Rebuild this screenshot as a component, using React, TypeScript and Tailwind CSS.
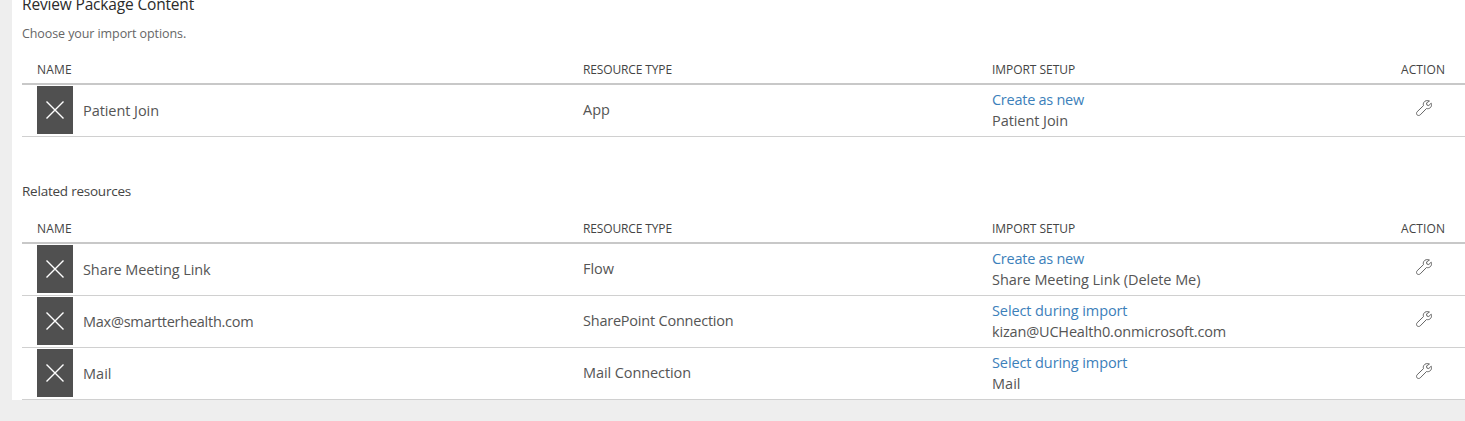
type Row = {
  name: string;
  nameTracking: string;
  type: string;
  typeTracking: string;
  setup: string;
  setupTracking: string;
  target: string;
  targetTracking: string;
};

const packageRows: Row[] = [
  {
    name: 'Patient Join',
    nameTracking: 'tracking-[-0.06px]',
    type: 'App',
    typeTracking: 'tracking-[0.03px]',
    setup: 'Create as new',
    setupTracking: 'tracking-[-0.26px]',
    target: 'Patient Join',
    targetTracking: 'tracking-[-0.06px]',
  },
];

const relatedRows: Row[] = [
  {
    name: 'Share Meeting Link',
    nameTracking: 'tracking-[-0.09px]',
    type: 'Flow',
    typeTracking: 'tracking-[-0.03px]',
    setup: 'Create as new',
    setupTracking: 'tracking-[-0.26px]',
    target: 'Share Meeting Link (Delete Me)',
    targetTracking: 'tracking-[-0.06px]',
  },
  {
    name: 'Max@smartterhealth.com',
    nameTracking: 'tracking-[-0.26px]',
    type: 'SharePoint Connection',
    typeTracking: 'tracking-[-0.22px]',
    setup: 'Select during import',
    setupTracking: 'tracking-[-0.1px]',
    target: 'kizan@UCHealth0.onmicrosoft.com',
    targetTracking: 'tracking-[-0.17px]',
  },
  {
    name: 'Mail',
    nameTracking: 'tracking-[0.02px]',
    type: 'Mail Connection',
    typeTracking: 'tracking-[-0.09px]',
    setup: 'Select during import',
    setupTracking: 'tracking-[-0.1px]',
    target: 'Mail',
    targetTracking: 'tracking-[0.02px]',
  },
];

const columns = 'grid grid-cols-[546px_409px_409px_1fr] pl-[15px]';

function CrossIcon() {
  return (
    <svg width="18" height="18" viewBox="0 0 18 18" fill="none" stroke="#fff" strokeWidth="1.4">
      <path d="M0.5 0.5L17.5 17.5M17.5 0.5L0.5 17.5" />
    </svg>
  );
}

function WrenchIcon() {
  return (
    <svg
      width="16"
      height="16"
      viewBox="0 0 16 16"
      fill="none"
      stroke="#666"
      strokeWidth="1"
      strokeLinejoin="round"
      strokeLinecap="round"
    >
      <path d="M13.1 0.9C11.3 0.1 8.9 0.6 7.9 2.3C7.2 3.4 7.1 4.6 7.5 5.6L1.1 11.8C0.3 12.7 0.3 14.1 1.1 14.9C1.9 15.7 3.3 15.7 4.2 14.9L10.5 8.5C11.7 8.9 13.1 8.7 14.2 7.8C15.5 6.7 15.9 4.8 15.2 3.2L12.8 5.5L10.9 5.1L10.6 3.3Z" />
    </svg>
  );
}

function ResourceTable({ rows }: { rows: Row[] }) {
  return (
    <div>
      <div
        className={`${columns} h-[31px] border-b-2 border-[#c8c8c8] text-[12px] leading-[31px] text-[#444]`}
      >
        <div className="tracking-[0.23px]">NAME</div>
        <div className="tracking-[-0.13px]">RESOURCE TYPE</div>
        <div className="tracking-[-0.05px]">IMPORT SETUP</div>
        <div className="tracking-[0.09px]">ACTION</div>
      </div>
      {rows.map((row) => (
        <div
          key={row.name}
          className={`${columns} h-[52px] border-b border-[#d0d0d0] text-[14.5px] leading-[21px] text-[#555]`}
        >
          <div className="flex items-center gap-2.5">
            <div className="-mt-px flex h-12 w-9 items-center justify-center bg-[#505050]">
              <CrossIcon />
            </div>
            <span className={row.nameTracking}>{row.name}</span>
          </div>
          <div className={`pt-[14px] ${row.typeTracking}`}>{row.type}</div>
          <div className="pt-1">
            <div className={`text-[#3c80ba] ${row.setupTracking}`}>{row.setup}</div>
            <div className={row.targetTracking}>{row.target}</div>
          </div>
          <div className="pt-[15px] pl-[15px]">
            <WrenchIcon />
          </div>
        </div>
      ))}
    </div>
  );
}

export default function App() {
  return (
    <div className="flow-root h-[421px] overflow-hidden bg-[#eee] pl-3 font-['Open_Sans','Noto_Sans',sans-serif]">
      <div className="flow-root h-[400px] bg-white pl-2.5">
        <div className="flow-root h-[54px]">
          <h1 className="-mt-[7px] h-[22px] text-[15.5px] leading-[22px] tracking-[-0.17px] text-[#2b2b2b]">
            Review Package Content
          </h1>
          <p className="mt-[9px] text-[12.5px] leading-[20px] tracking-[-0.09px] text-[#666]">
            Choose your import options.
          </p>
        </div>
        <ResourceTable rows={packageRows} />
        <h2 className="h-[76px] pt-[44px] text-[13.5px] leading-[20px] tracking-[-0.23px] text-[#444]">
          Related resources
        </h2>
        <ResourceTable rows={relatedRows} />
      </div>
    </div>
  );
}
